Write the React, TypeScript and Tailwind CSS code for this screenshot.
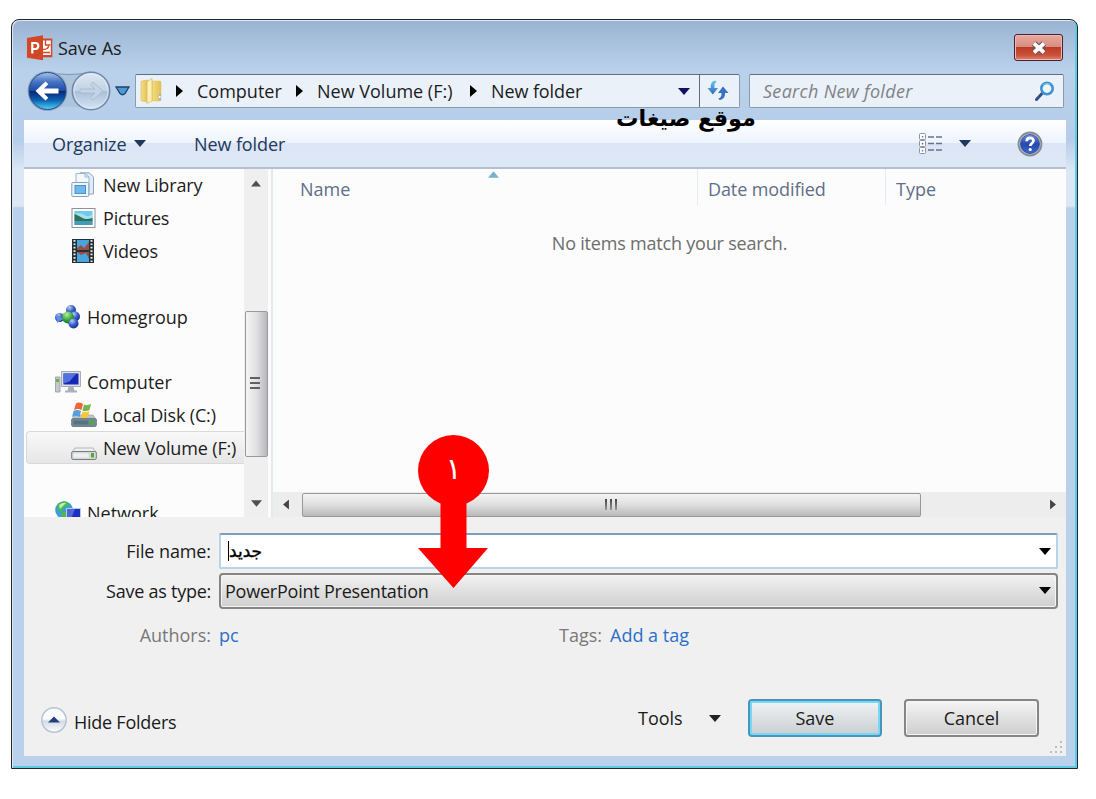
import type { ReactNode } from "react"
import clsx from "clsx"

function Caret({ className }: { className?: string }) {
  return (
    <svg viewBox="0 0 12 7" className={clsx("h-[7px] w-3 shrink-0", className)}>
      <path d="M0 0h12L6 7z" fill="currentColor" />
    </svg>
  )
}

function Crumb() {
  return (
    <svg viewBox="0 0 7 12" className="h-3 w-[7px] shrink-0">
      <path d="M0 0v12l7-6z" fill="#000" />
    </svg>
  )
}

function PowerPointIcon() {
  return (
    <svg viewBox="0 0 26 26" className="h-[26px] w-[26px] shrink-0">
      <path d="M13 3.500h12.300v18.800H13z" fill="#d24726" />
      <path d="M15.500 5.500h8.300v14.500h-8.300z" fill="#fff" />
      <path d="M18.500 5v5h5" fill="none" stroke="#d24726" strokeWidth="1.300" />
      <path d="M21.500 10.500c0 3-2 4-5.500 4M16 17.500h7" fill="none" stroke="#d24726" strokeWidth="1.300" />
      <path d="M0 3 16 .3v25L0 22.800z" fill="#d24726" />
      <path d="M5.300 18.500V8h3a2.900 2.900 0 0 1 0 6H5.300" fill="none" stroke="#fff" strokeWidth="2.200" />
    </svg>
  )
}

function NavButtons() {
  return (
    <svg viewBox="0 0 84 42" className="h-[42px] w-[84px] shrink-0">
      <defs>
        <linearGradient id="back" x1="0" y1="0" x2="0" y2="1">
          <stop offset="0" stopColor="#a9c4ea" />
          <stop offset=".25" stopColor="#4674c4" />
          <stop offset=".49" stopColor="#1e4ba8" />
          <stop offset=".5" stopColor="#06246f" />
          <stop offset=".75" stopColor="#0d62b4" />
          <stop offset="1" stopColor="#4fd5f4" />
        </linearGradient>
        <linearGradient id="forward" x1="0" y1="0" x2="0" y2="1">
          <stop offset="0" stopColor="#dce7f2" />
          <stop offset=".49" stopColor="#c3d3e5" />
          <stop offset=".5" stopColor="#a9bfd8" />
          <stop offset="1" stopColor="#d5e5f4" />
        </linearGradient>
      </defs>
      <path d="M20 2Q42 7 64 2V39Q42 34 20 39z" fill="#adc4de" />
      <path d="M20 2Q42 7 64 2" fill="none" stroke="#8096b0" strokeWidth="1" />
      <circle cx="20.500" cy="21" r="20" fill="#91a8c5" />
      <circle cx="20.500" cy="21" r="18.500" fill="url(#back)" stroke="#234a84" strokeWidth="1" />
      <path d="m8.500 21 10-9.500 2.800 2.800-4.300 4.200h14.500v5H17l4.300 4.200-2.800 2.800z" fill="#fff" />
      <circle cx="64" cy="21" r="18.700" fill="url(#forward)" stroke="#7288a3" strokeWidth="1.500" />
      <circle cx="64" cy="21" r="17" fill="none" stroke="#e6eff8" strokeWidth="1" opacity=".7" />
      <path d="m76 21-10-9-2.500 2.500 4.500 4.500H53v4h15l-4.500 4.500L66 30z" fill="#c4d4e5" stroke="#a3b8d0" strokeWidth=".8" />
    </svg>
  )
}

function FolderIcon() {
  return (
    <svg viewBox="0 0 22 26" className="h-[26px] w-[22px] shrink-0">
      <defs>
        <linearGradient id="folder" x1="0" y1="0" x2="1" y2="0">
          <stop offset="0" stopColor="#f3dd84" />
          <stop offset="1" stopColor="#e3bf51" />
        </linearGradient>
      </defs>
      <path d="M1 4q0-1 1-1l6-1v22l-6-1q-1 0-1-1z" fill="url(#folder)" stroke="#dcc06a" strokeWidth=".7" />
      <path d="M12 3h8q1 0 1 1v18q0 1-1 1h-8z" fill="url(#folder)" stroke="#dcc06a" strokeWidth=".5" />
      <path d="m7 3.500 5-3v22.500l-5 2.500z" fill="#fbf0b5" stroke="#d5b14c" strokeWidth=".6" />
      <path d="M19 16h2v6h-2z" fill="#8cbcd0" />
      <path d="M19 18h1.500v2H19z" fill="#fff" />
    </svg>
  )
}

function RefreshIcon() {
  return (
    <svg viewBox="0 0 22 21" className="h-[21px] w-[22px] shrink-0">
      <defs>
        <linearGradient id="refresh" x1="0" y1="0" x2="0" y2="1">
          <stop offset="0" stopColor="#6ac9ec" />
          <stop offset="1" stopColor="#2a69c0" />
        </linearGradient>
      </defs>
      <path d="M8.500.5C4.500 1 3.500 4 3.800 8H.5l5.300 6.500L11 8H7.500C7.200 5 7.300 3 9.500 2z" fill="url(#refresh)" />
      <path d="M12.500 20c4-.6 5.800-3 5.500-7h3.500L16 6.500 11 13h3.500c.2 3-.5 4.500-3 5.500z" fill="#386fc1" />
    </svg>
  )
}

function SearchIcon() {
  return (
    <svg viewBox="0 0 20 20" className="h-5 w-5 shrink-0">
      <path d="m1.500 18.500 6-6.500" stroke="#304f91" strokeWidth="3" strokeLinecap="round" />
      <circle cx="12" cy="7.500" r="5.700" fill="#e8f5ff" stroke="#4391cd" strokeWidth="2.600" />
      <path d="M8 4.500a5.500 5.500 0 0 1 7-1" fill="none" stroke="#6cb9e4" strokeWidth="1.500" />
    </svg>
  )
}

function ViewIcon() {
  return (
    <svg viewBox="0 0 25 21" className="h-[21px] w-[25px] shrink-0">
      <g fill="#fff" stroke="#8893a5" strokeWidth="1">
        <rect x="1.500" y=".5" width="6" height="6" rx="1" />
        <rect x="1.500" y="7.500" width="6" height="6" rx="1" />
        <rect x="1.500" y="14.500" width="6" height="6" rx="1" />
      </g>
      <path d="M3.800 3h1.500v1.500H3.800zM3.800 17h1.500v1.500H3.800z" fill="#6382b5" />
      <path d="M3.800 10h1.500v1.500H3.800z" fill="#dc3545" />
      <path d="M10 4h6m2 0h6M10 10.500h6m2 0h6M10 17h6m2 0h6" stroke="#64748b" strokeWidth="1.500" />
    </svg>
  )
}

function HelpIcon() {
  return (
    <svg viewBox="0 0 26 26" className="h-[26px] w-[26px] shrink-0">
      <defs>
        <linearGradient id="help" x1="0" y1="0" x2="0" y2="1">
          <stop offset="0" stopColor="#6f92e0" />
          <stop offset=".5" stopColor="#2448ae" />
          <stop offset="1" stopColor="#3d69cf" />
        </linearGradient>
      </defs>
      <circle cx="13" cy="13" r="11.500" fill="#c3c7cf" stroke="#858b96" strokeWidth="1.800" />
      <circle cx="13" cy="13" r="9.500" fill="url(#help)" stroke="#314a94" strokeWidth=".8" />
      <path d="M9.700 10.300c0-4.500 6.800-4.300 6.800-.6 0 2.600-3.200 2.600-3.200 5.300" fill="none" stroke="#fff" strokeWidth="2.700" />
      <circle cx="13.200" cy="18.500" r="1.600" fill="#fff" />
    </svg>
  )
}

function LibraryIcon() {
  return (
    <svg viewBox="0 0 24 26" className="h-[26px] w-6">
      <path d="M9 .8h9l4.500 4V22H9z" fill="#dcecf8" stroke="#8fa8c0" />
      <path d="M5 1.500h9l4 3.500v14H5z" fill="#f2f8fc" stroke="#9fb4c8" />
      <path d="M14 1.500V5h4" fill="none" stroke="#9fb4c8" />
      <rect x=".8" y="10.500" width="17" height="14" rx="1" fill="#eef7fd" stroke="#86a2bb" />
      <rect x="4" y="13.500" width="10.500" height="8" fill="#70b9ee" stroke="#4b90cb" />
    </svg>
  )
}

function PicturesIcon() {
  return (
    <svg viewBox="0 0 24 20" className="h-5 w-[25px]">
      <rect x=".5" y=".5" width="23" height="19" fill="#fff" stroke="#8b949e" />
      <path d="M3 3h18v14H3z" fill="#72c7ec" />
      <path d="M3 6q6-2 10 1t8-1v11H3z" fill="#a9e0ef" />
      <path d="M3 6q5 2 8 4t10 0v3H3z" fill="#27745b" />
      <path d="M3 13h18v4H3z" fill="#4799ba" />
    </svg>
  )
}

function VideosIcon() {
  return (
    <svg viewBox="0 0 22 24" className="ml-[1px] h-6 w-[22px]">
      <path d="M0 0h22v24H0z" fill="#263038" />
      <path d="M5 1h12v10H5zM5 13h12v10H5z" fill="#49a5df" />
      <path d="m5 9 4-3 3 3 5-6v8H5zM5 13l4 3 5-2 3 6v-7z" fill="#985044" />
      <path d="M2.500 1v22M19.500 1v22" stroke="#e7efe4" strokeWidth="2" strokeDasharray="1.700 1.700" />
    </svg>
  )
}

function HomegroupIcon() {
  return (
    <svg viewBox="0 0 26 24" className="h-6 w-[26px]">
      <defs>
        <radialGradient id="blueBall" cx=".35" cy=".25" r=".8">
          <stop offset="0" stopColor="#b7d2fa" />
          <stop offset=".5" stopColor="#3c64cd" />
          <stop offset="1" stopColor="#172b86" />
        </radialGradient>
        <radialGradient id="greenBall" cx=".4" cy=".25" r=".8">
          <stop offset="0" stopColor="#b4efa1" />
          <stop offset=".6" stopColor="#35a138" />
          <stop offset="1" stopColor="#136d24" />
        </radialGradient>
      </defs>
      <circle cx="4.500" cy="12.500" r="4.500" fill="url(#blueBall)" />
      <circle cx="16" cy="5" r="5" fill="url(#blueBall)" />
      <circle cx="20" cy="11.500" r="5" fill="url(#blueBall)" />
      <circle cx="13" cy="12.500" r="6" fill="url(#greenBall)" />
      <circle cx="18.500" cy="18.500" r="5" fill="url(#blueBall)" />
      <path d="m1 9 7 5-6 4z" fill="#648be0" />
    </svg>
  )
}

function ComputerIcon() {
  return (
    <svg viewBox="0 0 26 22" className="h-[22px] w-[26px]">
      <path d="M.5 6H5v15H.5z" fill="#c3c9c9" stroke="#929a9c" strokeWidth=".8" />
      <path d="M1 8h3v3H1z" fill="#54bf3d" />
      <path d="M6.500.5h19v15h-19z" fill="#dce0e5" stroke="#949ca6" strokeWidth=".8" />
      <path d="M8.500 2.500h15v11h-15z" fill="#1727b8" />
      <path d="M8.500 2.500h13l-7 8-6 2z" fill="#5272dc" />
      <path d="M13.500 16h5l1 3.500h-7zM10 19.500h12v2H10z" fill="#a7afb7" />
    </svg>
  )
}

function DriveIcon({ system }: { system?: boolean }) {
  return (
    <svg viewBox="0 0 26 26" className="h-[26px] w-[26px]">
      <path d="M4 13h18l3.500 5H.5z" fill={system ? "#b8c7ce" : "#eceeef"} stroke="#a1a5a7" strokeWidth=".7" />
      <rect x=".7" y="16.500" width="24.600" height="8" rx="1.500" fill={system ? "#708b98" : "#d7dadb"} stroke="#777e82" />
      <path d="M2.500 18.500h15v4h-15z" fill={system ? "#58737f" : "#eff1f1"} />
      <path d="M20 18h3v4.500h-3z" fill="#53aa2d" />
      {system && (
        <g>
          <path d="M5 1.500Q8-.5 12 2L10.500 8Q7 6 3 8z" fill="#ef6534" />
          <path d="M13 2.500q3 1.500 7-.5L18.500 8q-4 2-7 .5z" fill="#74b54d" />
          <path d="M2.500 9Q6 7 10 9L8.500 15Q5 13 1 15z" fill="#589fe1" />
          <path d="M11.500 9.500q3 1.500 7-.5L17 15q-4 2-7 .5z" fill="#fac736" />
        </g>
      )}
    </svg>
  )
}

function NetworkIcon() {
  return (
    <svg viewBox="0 0 26 25" className="h-[25px] w-[26px]">
      <circle cx="9" cy="9" r="8.800" fill="#3b9fd5" />
      <path d="M3 3q5-4 9-2l2 4-5 1-2 5-5-3zM6 12l5-1 1 6-5-1z" fill="#51b947" />
      <path d="M4 4q4-3 7-2L5 8z" fill="#bfeabb" />
      <path d="M11 7h15v12H11z" fill="#bac8e2" />
      <path d="M12 8h13v10H12z" fill="#1d2fbd" />
      <path d="M12 8h8l-4 10h-4z" fill="#4f68d8" />
    </svg>
  )
}

function TreeItem({ icon, label, nested, selected }: {
  icon: ReactNode
  label: string
  nested?: boolean
  selected?: boolean
}) {
  return (
    <div
      className={clsx(
        "flex h-[32.8px] shrink-0 items-center whitespace-nowrap",
        nested && !selected && "pl-[47px]",
        !nested && "pl-[31px]",
        selected && "ml-[2px] rounded-l-[4px] border border-r-0 border-[#d9d9d9] bg-linear-to-b from-[#f9f9f9] to-[#e6e6e6] pl-[44px]",
      )}
    >
      <span className="flex w-[32px] shrink-0 items-center">{icon}</span>
      <span className={clsx(nested && "tracking-[-0.15px]")}>{label}</span>
    </div>
  )
}

function Sidebar() {
  return (
    <div className="flex w-[247px] bg-[#fcfcfc]">
      <div className="flex w-[220px] flex-col overflow-hidden">
        <TreeItem icon={<LibraryIcon />} label="New Library" nested />
        <TreeItem icon={<PicturesIcon />} label="Pictures" nested />
        <TreeItem icon={<VideosIcon />} label="Videos" nested />
        <div className="h-[32.8px] shrink-0" />
        <TreeItem icon={<HomegroupIcon />} label="Homegroup" />
        <div className="h-[32.8px] shrink-0" />
        <TreeItem icon={<ComputerIcon />} label="Computer" />
        <TreeItem icon={<DriveIcon system />} label="Local Disk (C:)" nested />
        <TreeItem icon={<DriveIcon />} label="New Volume (F:)" nested selected />
        <div className="h-[32.8px] shrink-0" />
        <TreeItem icon={<NetworkIcon />} label="Network" />
      </div>
      <div className="flex w-6 flex-col items-center bg-[#efefef] text-[#505050]">
        <Caret className="mt-[11px] h-[6px] w-[10px] rotate-180" />
        <div className="mt-[124px] flex h-[146px] w-[23px] flex-col items-center justify-center gap-[3px] rounded-[2px] border border-[#9a9a9a] bg-linear-to-r from-[#f5f5f5] via-[#e0e0e2] to-[#b9b9bd] pr-[3px] pb-[3px]">
          <span className="h-[2px] w-[10px] bg-[#606060]" />
          <span className="h-[2px] w-[10px] bg-[#606060]" />
          <span className="h-[2px] w-[10px] bg-[#606060]" />
        </div>
        <Caret className="mt-[43px] h-[6px] w-[11px]" />
      </div>
    </div>
  )
}

function FileList() {
  return (
    <div className="flex flex-1 flex-col border-l-2 border-[#dfeaf7] bg-[#fcfcfc]">
      <div className="flex h-[36px] text-[#606e88]">
        <div className="relative flex w-[425px] items-center border-r border-[#e2ecf7] pt-[4px] pl-[27px]">
          <span>Name</span>
          <Caret className="absolute top-[2px] left-[215px] h-[5px] w-[11px] rotate-180 text-[#7caed0]" />
        </div>
        <div className="flex w-[188px] items-center border-r border-[#e2ecf7] pt-[4px] pl-[10px]">
          <span className="tracking-[-0.1px]">Date modified</span>
        </div>
        <div className="flex items-center pt-[4px] pl-[10px]">Type</div>
      </div>
      <div className="flex-1 pt-[26px] text-center tracking-[-0.2px] text-[#6d6d6d]">No items match your search.</div>
      <div className="flex h-[25px] items-center bg-[#ededed] text-[#444]">
        <Caret className="ml-[8px] h-[6px] w-[10px] rotate-90" />
        <div className="ml-[11px] flex h-[24px] w-[619px] items-center justify-center gap-[3px] rounded-[2px] border border-[#989898] bg-linear-to-b from-[#f4f4f4] via-[#dedede] to-[#b9b9bb] pr-[2px]">
          <span className="h-[11px] w-[2px] bg-linear-to-b from-[#444] to-[#999]" />
          <span className="h-[11px] w-[2px] bg-linear-to-b from-[#444] to-[#999]" />
          <span className="h-[11px] w-[2px] bg-linear-to-b from-[#444] to-[#999]" />
        </div>
        <Caret className="ml-[127px] h-[6px] w-[10px] -rotate-90" />
      </div>
    </div>
  )
}

function TitleBar() {
  return (
    <div className="flex h-[54px] items-start justify-between pr-[14px] pl-[15px]">
      <div className="flex items-center pt-[14px]">
        <PowerPointIcon />
        <span className="pl-[5px] leading-[28px]">Save As</span>
      </div>
      <button className="mt-[14px] flex h-[27px] w-[49px] items-center justify-center rounded-[3px] border-[1.5px] border-[#4b1f2b] bg-[linear-gradient(#e9aaa0,#d98b7f_48%,#bc3b27_50%,#c9503a_80%,#dd8570)] shadow-[inset_0_0_0_1px_#eeb9b0]">
        <svg viewBox="0 0 18 14" className="h-[14px] w-[18px]">
          <path d="m4 2.500 10 9M14 2.500l-10 9" stroke="#625058" strokeWidth="6" />
          <path d="m4 2.500 10 9M14 2.500l-10 9" stroke="#fff" strokeWidth="3.800" />
        </svg>
      </button>
    </div>
  )
}

function AddressRow() {
  return (
    <div className="flex h-[33px] items-center pl-[15px]">
      <NavButtons />
      <svg viewBox="0 0 15 10" className="ml-[4px] h-[10px] w-[15px] shrink-0">
        <path d="M1 1h13L10 7.500Q7.500 10 5 7.500z" fill="#4d9bd1" stroke="#1d426f" strokeWidth="1.300" />
      </svg>
      <div className="ml-[5px] flex h-[34px] w-[605px] shrink-0 rounded-[2px] border border-[#8a9bb0] border-t-[#626c7c] bg-[#eaf1f9] text-[#1c1c1c]">
        <div className="flex w-[564px] items-center border-r border-[#626c7c] pl-[4px]">
          <FolderIcon />
          <div className="flex w-[408px] items-center pl-[14px]">
            <Crumb />
            <span className="ml-[14px] w-[84px] shrink-0 whitespace-nowrap">Computer</span>
            <span className="ml-[15px] flex"><Crumb /></span>
            <span className="ml-[14px] w-[137px] shrink-0 whitespace-nowrap">New Volume (F:)</span>
            <span className="ml-[16px] flex"><Crumb /></span>
            <span className="ml-[14px] shrink-0 whitespace-nowrap tracking-[-0.1px]">New folder</span>
          </div>
          <Caret className="mt-[2px] ml-[108px] w-[12px] text-[#10105f]" />
        </div>
        <div className="flex flex-1 items-center justify-center pr-[3px]">
          <RefreshIcon />
        </div>
      </div>
      <div className="ml-[9px] flex h-[34px] w-[315px] shrink-0 items-center justify-between rounded-[2px] border border-[#8a9bb0] border-t-[#626c7c] bg-[#eaf1f9] pr-[8px] pl-[13px]">
        <span className="tracking-[0.3px] text-[#808285] italic">Search New folder</span>
        <SearchIcon />
      </div>
    </div>
  )
}

function CommandBar() {
  return (
    <div className="flex h-[49px] items-center border-b-2 border-[#b3c1d3] bg-[linear-gradient(#fff,#edf4fd_48%,#dce5f5_50%,#dde8f7)] text-[#1e395b]">
      <span className="w-[75px] pl-[28px] tracking-[-0.1px]">Organize</span>
      <Caret className="ml-[35px] w-[12px]" />
      <span className="ml-[48px] w-[92px] tracking-[-0.1px] whitespace-nowrap">New folder</span>
      <span className="ml-[632px] flex"><ViewIcon /></span>
      <Caret className="ml-[16px] w-[12px]" />
      <span className="ml-[46px] flex"><HelpIcon /></span>
    </div>
  )
}

function Footer() {
  return (
    <div className="h-[239px] bg-[#f0f0f0] pt-[16px] text-[#1a1a1a]">
      <div className="flex h-[36px] items-center">
        <label className="w-[187px] shrink-0 text-right tracking-[-0.1px]">File name:</label>
        <div className="ml-[8px] flex h-[36px] w-[839px] items-center justify-between rounded-[2px] border-2 border-[#b7d4e9] border-t-[#7d9fbd] bg-white pr-[5px] pl-[7px]">
          <span className="flex items-center">
            <span className="h-[20px] w-px bg-black" />
            <span dir="rtl" className="font-['DejaVu_Sans',sans-serif] text-[17px] leading-none text-black [-webkit-text-stroke:0.4px_#000]">جديد</span>
          </span>
          <Caret className="text-black" />
        </div>
      </div>
      <div className="mt-[3px] flex h-[37px] items-center">
        <label className="w-[187px] shrink-0 text-right tracking-[-0.25px]">Save as type:</label>
        <div className="ml-[8px] flex h-[36px] w-[839px] items-center justify-between rounded-[4px] border-2 border-[#858585] bg-linear-to-b from-[#f2f2f2] to-[#cfcfcf] pr-[5px] pl-[4px] shadow-[inset_0_0_0_1px_#f5f5f5]">
          <span className="tracking-[-0.22px]">PowerPoint Presentation</span>
          <Caret className="text-black" />
        </div>
      </div>
      <div className="mt-[13px] flex h-[26px] items-center text-[#787878]">
        <span className="w-[187px] text-right">Authors:</span>
        <span className="ml-[8px] w-[310px] text-[#2a6fc9]">pc</span>
        <span className="w-[73px] text-right">Tags:</span>
        <span className="ml-[8px] text-[#2a6fc9]">Add a tag</span>
      </div>
      <div className="mt-[51px] flex h-[38px] items-center">
        <svg viewBox="0 0 26 26" className="mt-[3px] ml-[17px] h-[26px] w-[26px] shrink-0">
          <defs>
            <linearGradient id="hide" x1="0" y1="0" x2="0" y2="1">
              <stop offset=".45" stopColor="#fbfcfd" />
              <stop offset=".55" stopColor="#d3dae4" />
              <stop offset="1" stopColor="#fff" />
            </linearGradient>
          </defs>
          <circle cx="13" cy="13" r="12.200" fill="url(#hide)" stroke="#b7c4d4" strokeWidth="1.500" />
          <path d="m7 15.500 6-6 6 6z" fill="#263e7d" />
        </svg>
        <span className="mt-[8px] w-[571px] pl-[7px] tracking-[-0.25px]">Hide Folders</span>
        <span className="w-[71px]">Tools</span>
        <Caret className="text-[#222]" />
        <button className="ml-[27px] h-[38px] w-[134px] shrink-0 rounded-[4px] border-2 border-[#4795bd] bg-linear-to-b from-[#f0f4f6] to-[#cbced0] shadow-[inset_0_0_0_2px_#77d7f4]">Save</button>
        <button className="ml-[22px] h-[38px] w-[135px] shrink-0 rounded-[4px] border-2 border-[#858585] bg-linear-to-b from-[#f4f4f4] to-[#cecece] shadow-[inset_0_0_0_1px_#f6f6f6]">Cancel</button>
      </div>
      <div className="flex justify-end pt-[4px] pr-[3px]">
        <svg viewBox="0 0 13 13" className="h-[13px] w-[13px]">
          <path d="M10 0h2v2h-2zM5 5h2v2H5zM10 5h2v2h-2zM0 10h2v2H0zM5 10h2v2H5zM10 10h2v2h-2z" fill="#bcbcbc" />
        </svg>
      </div>
    </div>
  )
}

// numbered callout pointing at the file type
function StepArrow() {
  return (
    <svg viewBox="0 0 72 154" className="absolute top-[435px] left-[418px] h-[154px] w-[72px]">
      <circle cx="35.500" cy="35.500" r="35.500" fill="#f00" />
      <path d="M22.500 60h26v53H70L35.500 153 0 113h22.500z" fill="#f00" />
      <text x="35.500" y="44" textAnchor="middle" fill="#fff" fontSize="30" fontFamily="DejaVu Sans, sans-serif">١</text>
    </svg>
  )
}

export default function App() {
  return (
    <div className="relative h-[799px] w-[1096px] overflow-hidden bg-white pt-[19px] pl-[11px] font-['Open_Sans','Noto_Sans',sans-serif] text-[18px] leading-[24px] text-[#1c1c1c]">
      <div className="h-[750px] w-[1067px] rounded-t-[8px] border-[1.5px] border-[#24262b] bg-[linear-gradient(#9ab3d1,#b9d1ea_50px,#b5cde9_120px,#dbe7f5_150px,#dbe7f5_186px,#b9d1ea_188px)] shadow-[inset_1px_1px_0_#dce9f5,inset_-2px_-2px_0_#5dcbe4]">
        <TitleBar />
        <AddressRow />
        <div className="mt-[13px] mr-[11px] ml-[12px]">
          <CommandBar />
          <div className="flex h-[348px]">
            <Sidebar />
            <FileList />
          </div>
          <Footer />
        </div>
      </div>
      <div dir="rtl" className="absolute top-[104px] left-[616px] font-['DejaVu_Sans',sans-serif] text-[22.400px] leading-[28px] font-bold whitespace-nowrap text-black">موقع صيغات</div>
      <StepArrow />
    </div>
  )
}
